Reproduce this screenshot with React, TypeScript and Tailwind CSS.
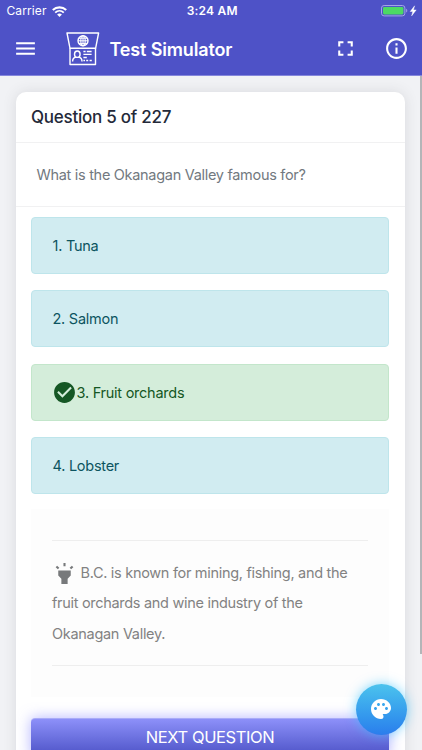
import React from "react";
import {
  MdMenu,
  MdFullscreen,
  MdInfoOutline,
  MdCheckCircle,
  MdHighlight,
  MdPalette,
} from "react-icons/md";

const answers = [
  { text: "1. Tuna", correct: false },
  { text: "2. Salmon", correct: false },
  { text: "3. Fruit orchards", correct: true },
  { text: "4. Lobster", correct: false },
];

function WifiIcon() {
  return (
    <svg width="15" height="11" viewBox="0 0 15 11" fill="none" stroke="white">
      <path d="M.8 4.1C4.6.4 10.4.4 14.2 4.1" strokeWidth="2.1" />
      <path d="M3.2 6.6c2.5-2.3 6.1-2.3 8.6 0" strokeWidth="1.9" />
      <path d="M5.1 8.5c1.4-1.2 3.4-1.2 4.8 0L7.5 11z" fill="white" stroke="none" />
    </svg>
  );
}

function BatteryIcon() {
  return (
    <svg width="37" height="12" viewBox="0 0 37 12" fill="none">
      <rect x=".5" y=".5" width="23.4" height="10.4" rx="2.6" stroke="#a3a5e6" />
      <rect x="2" y="2" width="20.4" height="7.4" rx="1.3" fill="#4cd964" />
      <path d="M25.2 3.8c1.5.6 1.5 3.2 0 3.8z" fill="#a3a5e6" />
      <path d="M33.6.8 29.2 6.5h2.6l-1.2 4.4 4.6-6h-2.7z" fill="white" stroke="white" strokeWidth=".4" />
    </svg>
  );
}

function BoothLogo() {
  return (
    <svg width="34" height="34" viewBox="0 0 34 34" fill="none" stroke="white" strokeWidth="1.4">
      <path d="M1 1h31.6l-3 15.3H4z" strokeLinejoin="round" />
      <path d="M4 16.3v16.2h25.5V16.3" strokeLinejoin="round" />
      <circle cx="17" cy="8.8" r="5" />
      <ellipse cx="17" cy="8.8" rx="2.2" ry="5" strokeWidth="1.1" />
      <path d="M12 8.8h10M12.8 6.2h8.4M12.8 11.4h8.4M17 3.8v10" strokeWidth="1" />
      <ellipse cx="11.3" cy="22.2" rx="2.8" ry="3.2" />
      <path d="M9.9 25c-2.3.5-3.3 1.6-3.3 4.4M12.7 25c2.3.5 3.3 1.6 3.3 4.4" />
      <path d="M17.4 19.5h2.2M20.8 19.5h4.8M17.4 22.4h8.2M17.4 25.5h3.4M17.4 28.5h1.6M20.2 28.5h2M23.6 28.5h2.2" />
    </svg>
  );
}

export default function App() {
  return (
    <div className="relative h-[750px] w-[422px] overflow-hidden bg-[#f1f2f5] font-['Inter','Liberation_Sans',sans-serif]">
      <header className="flex h-[76px] flex-col border-b border-[#8587dc] bg-[#4e52c7] text-white">
        <div className="grid h-[22px] grid-cols-3 items-center pl-[6.5px] pr-[4px]">
          <div className="flex items-center gap-[5px] text-[12px] leading-[22px]">
            <span className="tracking-[0.1px]">Carrier</span>
            <WifiIcon />
          </div>
          <span className="text-center text-[12px] font-semibold leading-[22px] tracking-[0.2px]">3:24 AM</span>
          <div className="flex justify-end"><BatteryIcon /></div>
        </div>
        <div className="flex h-[53px] items-center pl-[13px] pr-[13px]">
          <MdMenu className="size-[25px]" />
          <div className="ml-[28px] mt-[1px]"><BoothLogo /></div>
          <h1 className="ml-[9.5px] mt-[3px] whitespace-nowrap text-[18px] font-semibold leading-6 tracking-[-0.15px]">Test Simulator</h1>
          <MdFullscreen className="ml-auto size-[25px]" />
          <MdInfoOutline className="ml-[26px] size-[25px]" />
        </div>
      </header>

      <main className="px-4 pt-4">
        <section className="h-[720px] w-[388.5px] rounded-[10px] bg-white shadow-[0_0_14px_rgba(60,60,70,0.13)]">
          <div className="flex h-[51px] items-center border-b border-[#f1f1f2] pl-[15px]">
            <h2 className="text-[17px] font-medium leading-6 tracking-[-0.25px] text-[#242939]">Question 5 of 227</h2>
          </div>
          <div className="flex h-[64px] items-center border-b border-[#f1f1f2] pl-[20.5px] pt-[1px]">
            <p className="text-[14.5px] tracking-[-0.3px] text-[#727980]">What is the Okanagan Valley famous for?</p>
          </div>
          <div className="flex flex-col gap-[16.3px] px-[15px] pt-[10px]">
            {answers.map((answer) => (
              <div
                key={answer.text}
                className={`flex h-[57px] w-[358px] items-center rounded-[4px] border pl-[20.5px] pt-[1px] text-[14.5px] tracking-[-0.25px] ${
                  answer.correct
                    ? "border-[#c3e6cb] bg-[#d4edda] text-[#155724]"
                    : "border-[#bee5eb] bg-[#d1ecf1] text-[#0c5460]"
                }`}
              >
                {answer.correct && <MdCheckCircle className="-ml-[1px] size-[25px] shrink-0" />}
                <span>{answer.text}</span>
              </div>
            ))}
          </div>
          <div className="ml-[15px] mt-[15px] h-[188px] w-[358px] bg-[#fdfdfd] px-[21px] pt-[31px]">
            <div className="h-[126px] border-y border-[#eeeeee] pt-[17px] text-[14.5px] leading-[30.5px] tracking-[-0.3px] text-[#828282]">
              <p className="whitespace-nowrap">
                <MdHighlight className="mr-[3.5px] inline-block size-[25px] align-[-8px] text-[#77797b]" />
                <span>B.C. is known for mining, fishing, and the</span>
              </p>
              <p>fruit orchards and wine industry of the</p>
              <p>Okanagan Valley.</p>
            </div>
          </div>
          <button className="ml-[15px] mt-[21px] block h-[40px] w-[358px] rounded-[4px] border-t border-[#a9abf7] bg-linear-to-b from-[#8d90f9] to-[#4b4fc4] pb-[3px] text-[16.5px] leading-6 tracking-[-0.4px] text-white shadow-[0_0_14px_rgba(105,108,255,0.5)]">
            NEXT QUESTION
          </button>
        </section>
      </main>

      <div className="absolute right-0 top-[76px] h-[578px] w-[2px] bg-[#b4b5b8]" />
      <button className="absolute left-[355.5px] top-[683.5px] flex size-[51px] items-center justify-center rounded-full bg-linear-to-b from-[#4cc3ed] to-[#2b7dec] text-white shadow-[0_0_12px_rgba(60,195,255,0.65)]">
        <MdPalette className="size-[24px]" />
      </button>
    </div>
  );
}
